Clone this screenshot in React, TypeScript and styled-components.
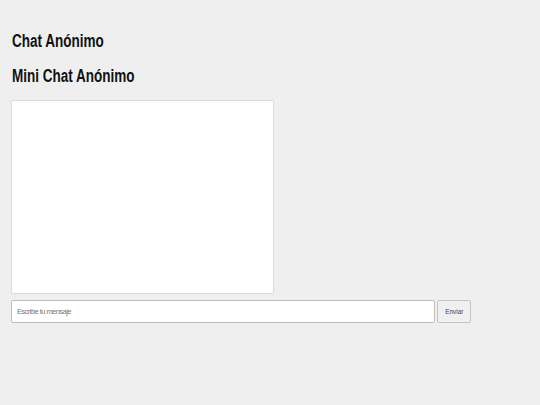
import React, { useState } from 'react'
import styled, { createGlobalStyle } from 'styled-components'

const GlobalStyle = createGlobalStyle`
  html, body {
    margin: 0;
    padding: 0;
    background: #efefef;
  }
  body {
    font-family: "Liberation Sans", Arial, sans-serif;
    color: #111;
  }
`

const Page = styled.div`
  padding: 31px 11px 0;
  display: flex;
  flex-direction: column;
`

const Title = styled.h1`
  font-size: 18px;
  font-weight: 700;
  line-height: 20px;
  margin: 0 0 15px 1px;
`

const Subtitle = styled.h2`
  font-size: 18px;
  font-weight: 700;
  line-height: 20px;
  margin: 0 0 14px 1px;
`

// the reference text is drawn in a narrow face, so squeeze it
const Narrow = styled.span<{ $ratio?: number }>`
  display: inline-block;
  white-space: nowrap;
  transform: scaleX(${({ $ratio }) => $ratio ?? 0.75});
  transform-origin: left center;
`

const ChatBox = styled.div`
  width: 261px;
  height: 192px;
  background: #fff;
  border: 1px solid #dcdcdc;
  border-radius: 2px;
  overflow-y: auto;
  margin-bottom: 6px;
`

const Form = styled.form`
  display: flex;
  gap: 2px;
`

const MessageInput = styled.input`
  width: 424px;
  height: 23px;
  box-sizing: border-box;
  border: 1px solid #bdbdbd;
  border-radius: 2px;
  background: #fff;
  padding: 0 5px;
  font-family: inherit;
  font-size: 7.5px;
  letter-spacing: -0.55px;
  outline: none;
  &::placeholder {
    color: #777;
  }
`

const SendButton = styled.button`
  width: 34px;
  height: 23px;
  box-sizing: border-box;
  border: 1px solid #c4c4c4;
  border-radius: 2px;
  background: #f0f0f0;
  font-family: inherit;
  font-size: 8px;
  font-weight: 400;
  color: #444;
  padding: 0;
  cursor: pointer;
  display: flex;
  align-items: center;
  justify-content: center;
`

const App: React.FC = () => {
  const [text, setText] = useState('')
  return (
    <>
      <GlobalStyle />
      <Page>
        <Title><Narrow>Chat Anónimo</Narrow></Title>
        <Subtitle><Narrow>Mini Chat Anónimo</Narrow></Subtitle>
        <ChatBox />
        <Form onSubmit={(e) => { e.preventDefault(); setText('') }}>
          <MessageInput
            placeholder="Escribe tu mensaje"
            value={text}
            onChange={(e) => setText(e.target.value)}
          />
          <SendButton type="submit">
            <Narrow $ratio={0.8} style={{ transformOrigin: 'center' }}>Enviar</Narrow>
          </SendButton>
        </Form>
      </Page>
    </>
  )
}

export default App
